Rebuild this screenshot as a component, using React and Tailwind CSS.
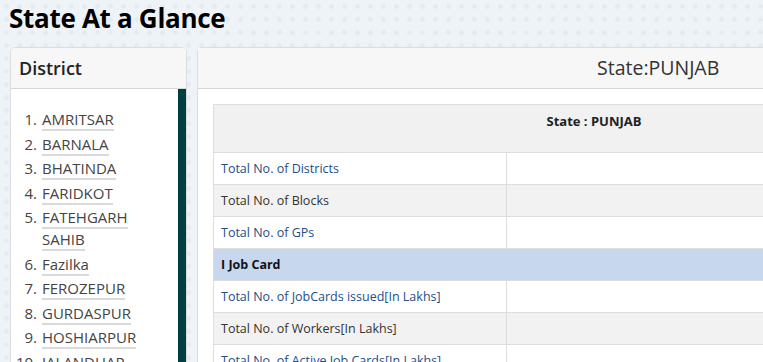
import React from 'react';

const districts = [
    'AMRITSAR',
    'BARNALA',
    'BHATINDA',
    'FARIDKOT',
    'FATEHGARH SAHIB',
    'Fazilka',
    'FEROZEPUR',
    'GURDASPUR',
    'HOSHIARPUR',
    'JALANDHAR',
    'KAPURTHALA',
];

// type: link = blue label, plain = grey text, section = highlighted heading
const rows = [
    { label: 'Total No. of Districts', type: 'link' },
    { label: 'Total No. of Blocks', type: 'plain' },
    { label: 'Total No. of GPs', type: 'link' },
    { label: 'I Job Card', type: 'section' },
    { label: 'Total No. of JobCards issued[In Lakhs]', type: 'link' },
    { label: 'Total No. of Workers[In Lakhs]', type: 'plain' },
    { label: 'Total No. of Active Job Cards[In Lakhs]', type: 'link' },
];

const App = () => {
    return (
        <div
            className="w-[763px] h-[362px] overflow-hidden bg-[#eef3f8] bg-[radial-gradient(circle,#e4eaf1_2px,transparent_2.5px)] bg-[length:13px_13px] text-[#333]"
            style={{ fontFamily: '"Open Sans", "Noto Sans", sans-serif' }}
        >
            {/* Page title */}
            <h1 className="px-[9px] pt-[1px] h-[47px] text-[26px] font-bold text-black leading-[34px] tracking-[-0.3px]">
                State At a Glance
            </h1>

            <div className="flex gap-[10px] pl-[10px] w-[1000px]">
                {/* District list */}
                <div className="w-[177px] shrink-0 bg-white border border-[#dcdcdc] rounded-t-[5px] overflow-hidden">
                    <div className="h-[41px] bg-[#f7f7f7] border-b border-[#d6d6d6] px-[8px] flex items-center">
                        <span className="text-[18px] font-semibold text-[#222]">District</span>
                    </div>
                    <div className="flex h-[300px]">
                        <ol className="flex-1 pt-[19px] text-[15px] leading-[22px]">
                            {districts.map((name, i) => (
                                <li key={name} className="flex mb-[2.5px]">
                                    <span className="w-[31px] shrink-0 text-right pr-[5px] text-[#444]">{i + 1}.</span>
                                    <span className="w-[120px]">
                                        <span className="text-[#444] border-b-2 border-[#d9d9d9]">
                                            {name}
                                        </span>
                                    </span>
                                </li>
                            ))}
                        </ol>
                        <div className="w-[8px] bg-[#013f43]"></div>
                    </div>
                </div>

                {/* State summary */}
                <div className="flex-1 bg-white border border-[#dcdcdc] rounded-t-[5px]">
                    <div className="h-[41px] bg-[#f7f7f7] border-b border-[#d6d6d6] flex items-center">
                        <span className="ml-[399px] text-[19.5px] text-[#333]">State:PUNJAB</span>
                    </div>
                    <div className="pt-[15px] pl-[15px]">
                        <table className="w-[762px] border-collapse text-[12.5px]">
                            <thead>
                                <tr className="h-[48px] bg-[#f1f1f1]">
                                    <th colSpan={2} className="border border-[#dddddd] text-[13px] font-bold text-[#222] pb-[14px]">
                                        State : PUNJAB
                                    </th>
                                </tr>
                            </thead>
                            <tbody>
                                {rows.map((row) => {
                                    if (row.type === 'section') {
                                        return (
                                            <tr key={row.label} className="h-[32px] bg-[#c6d7ee]">
                                                <td colSpan={2} className="border border-[#dddddd] px-[7px] pt-[2px] font-bold text-[#111]">
                                                    {row.label}
                                                </td>
                                            </tr>
                                        );
                                    }
                                    const shaded = row.type === 'plain';
                                    return (
                                        <tr key={row.label} className={`h-[32px] ${shaded ? 'bg-[#f2f2f2]' : 'bg-white'}`}>
                                            <td className={`w-[293px] border border-[#dddddd] px-[7px] pt-[2px] ${row.type === 'link' ? 'text-[#1d4e89]' : 'text-[#333]'}`}>
                                                {row.label}
                                            </td>
                                            <td className="border border-[#dddddd]"></td>
                                        </tr>
                                    );
                                })}
                            </tbody>
                        </table>
                    </div>
                </div>
            </div>
        </div>
    );
};

export default App;
